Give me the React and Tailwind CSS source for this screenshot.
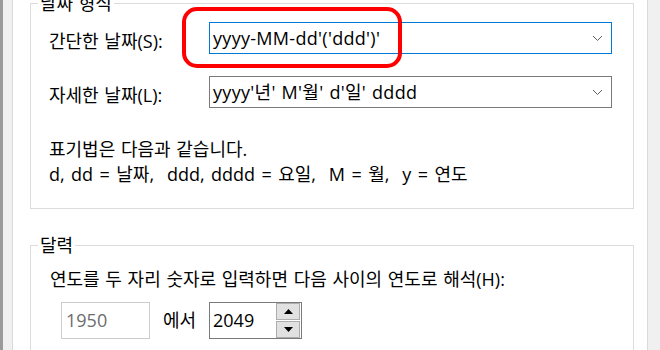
const ko = "font-['Open_Sans','Noto_Sans_CJK_KR',sans-serif] [word-spacing:1px]";

function Chevron() {
  return (
    <svg width="11" height="7" viewBox="0 0 11 7" className="text-[#606060]">
      <polyline points="1,1 5.5,5.5 10,1" fill="none" stroke="currentColor" strokeWidth="1" />
    </svg>
  );
}

function Combo({ value, focused }) {
  return (
    <div
      className={
        "flex h-[32px] w-[403px] items-center justify-between border bg-white pl-[3px] pr-[8px] text-[18px] leading-none tracking-[0.3px] " +
        (focused ? "border-[#0078d7]" : "border-[#7a7a7a]")
      }
    >
      <span>{value}</span>
      <Chevron />
    </div>
  );
}

function Arrow({ up }) {
  return (
    <svg width="9" height="5" viewBox="0 0 9 5">
      <polygon points={up ? "0,5 9,5 4.5,0" : "0,0 9,0 4.5,5"} fill="#000" />
    </svg>
  );
}

export default function App() {
  return (
    <div className={"relative flex h-[350px] w-[660px] overflow-hidden bg-white text-black " + ko}>
      <div className="flex w-[13px] shrink-0 border-r border-[#dadada] bg-[#f0f0f0]">
        <div className="w-[3px] bg-[#9a9a9a]" />
      </div>

      <main className="flex flex-1 flex-col pl-[17px] pr-[13px]">
        <fieldset className="mt-[-7px] border border-[#dcdcdc]">
          <legend className="ml-[7px] px-[2px] text-[18px] leading-[20px]">날짜 형식</legend>
          <div className="pb-[21px] pl-[18px] pr-[21px]">
            <div className="mt-[9px] flex items-center">
              <span className="mt-[6px] w-[160px] text-[18px] leading-[24px]">간단한 날짜(S):</span>
              <Combo value="yyyy-MM-dd'('ddd')'" focused />
            </div>
            <div className="mt-[22px] flex items-center">
              <span className="mt-[6px] w-[160px] text-[18px] leading-[24px]">자세한 날짜(L):</span>
              <Combo value="yyyy'년' M'월' d'일' dddd" />
            </div>
            <div className="mt-[29px] text-[18px] leading-[25px]">
              <p>표기법은 다음과 같습니다.</p>
              <p className="whitespace-pre [word-spacing:1.75px]">d, dd = 날짜,  ddd, dddd = 요일,  M = 월,  y = 연도</p>
            </div>
          </div>
        </fieldset>

        <fieldset className="mt-[26px] border border-[#dcdcdc]">
          <legend className="ml-[7px] px-[2px] text-[18px] leading-[20px]">달력</legend>
          <div className="pb-[20px] pl-[19px]">
            <p className="mt-[12px] text-[18px] leading-[25px]">
              연도를 두 자리 숫자로 입력하면 다음 사이의 연도로 해석(H):
            </p>
            <div className="mt-[10px] flex items-center pl-[11px]">
              <div className="flex h-[37px] w-[89px] items-center border border-[#cccccc] pl-[4px] text-[18px] text-[#6d6d6d]">
                1950
              </div>
              <span className="ml-[13px] w-[46px] text-[18px]">에서</span>
              <div className="flex h-[37px] w-[93px] items-center justify-between border border-[#7a7a7a] pl-[3px] pr-[1px] text-[18px]">
                <span>2049</span>
                <div className="flex flex-col gap-[1px]">
                  <div className="flex h-[17px] w-[24px] items-center justify-center border border-[#adadad] bg-[#e1e1e1]">
                    <Arrow up />
                  </div>
                  <div className="flex h-[17px] w-[24px] items-center justify-center border border-[#adadad] bg-[#e1e1e1]">
                    <Arrow />
                  </div>
                </div>
              </div>
            </div>
          </div>
        </fieldset>
      </main>

      <div className="w-[13px] shrink-0 border-l border-[#dadada] bg-[#f0f0f0]" />

      <div className="pointer-events-none absolute left-[182px] top-[7px] h-[61px] w-[220px] rounded-[15px] border-[4px] border-[#ff0000]" />
    </div>
  );
}
